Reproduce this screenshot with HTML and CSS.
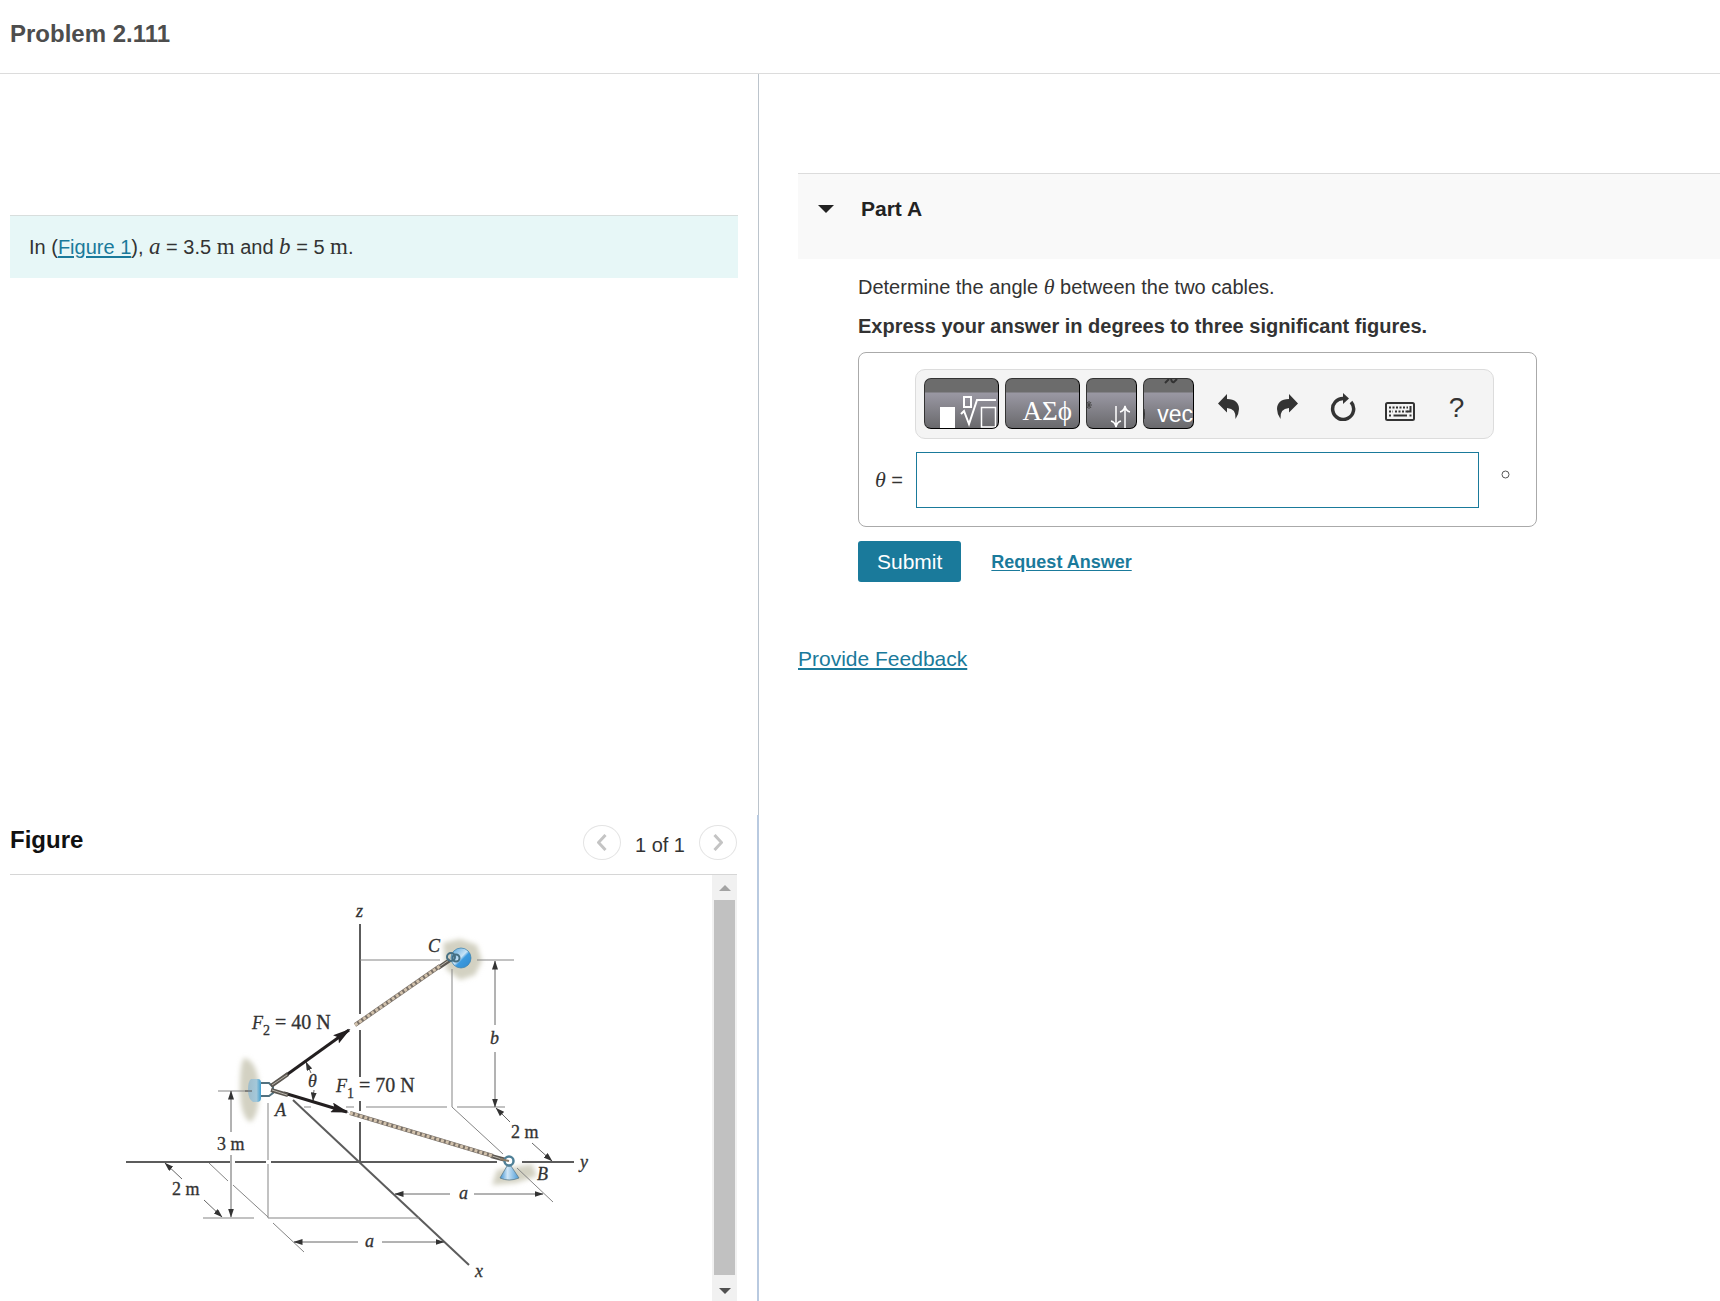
FILE: index.html
```html
<!DOCTYPE html>
<html lang="en">
<head>
<meta charset="utf-8">
<title>Problem 2.111</title>
<meta name="viewport" content="width=device-width, initial-scale=1">
<link rel="stylesheet" href="styles.css">
</head>
<body>
<header class="page-header">
  <h1 class="page-title">Problem 2.111</h1>
</header>
<main class="layout">
  <div class="side">
    <section class="intro">
      <p class="intro-box">In (<a href="#figure">Figure 1</a>), <i class="math var">a</i> = 3.5 <span class="math">m</span> and <i class="math var">b</i> = 5 <span class="math">m</span>.</p>
    </section>
    <section class="figure" id="figure">
      <div class="figure-head">
        <h2 class="figure-title">Figure</h2>
        <nav class="pager" aria-label="Figure navigation">
          <button class="pager-btn" type="button" aria-label="Previous figure">
            <svg width="10" height="17" viewBox="0 0 10 17"><path d="M8.500 1 1.500 8.500 8.500 16"/></svg>
          </button>
          <span class="pager-text">1 of 1</span>
          <button class="pager-btn" type="button" aria-label="Next figure">
            <svg width="10" height="17" viewBox="0 0 10 17"><path d="M1.500 1 8.500 8.500 1.500 16"/></svg>
          </button>
        </nav>
      </div>
      <div class="figure-view">
        <svg class="diagram" viewBox="10 875 702 426" role="img" aria-label="Two cables attached at A, running to B and C">
          <defs>
            <marker id="tip" viewBox="0 0 9 6" refX="8.500" refY="3" markerWidth="9" markerHeight="6" markerUnits="userSpaceOnUse" orient="auto-start-reverse"><path d="M0 0 9 3 0 6z" fill="#333"/></marker>
            <marker id="force" viewBox="0 0 18 10" refX="16" refY="5" markerWidth="18" markerHeight="10" markerUnits="userSpaceOnUse" orient="auto"><path d="M0 0 18 5 0 10 3 5z" fill="#231f20"/></marker>
            <filter id="soft" x="-30%" y="-30%" width="160%" height="160%"><feGaussianBlur stdDeviation="2.500"/></filter>
            <linearGradient id="pad"><stop offset="0" stop-color="#9dbccb"/><stop offset=".65" stop-color="#a5c8d9"/><stop offset="1" stop-color="#3f9fd0"/></linearGradient>
            <linearGradient id="cone"><stop offset="0" stop-color="#3b8fd0"/><stop offset=".4" stop-color="#cfe6f7"/><stop offset="1" stop-color="#4a9ad6"/></linearGradient>
            <linearGradient id="ball" x1="0" y1="0" x2="1" y2="1"><stop offset="0" stop-color="#4fa3dc"/><stop offset=".48" stop-color="#c9e3f6"/><stop offset=".58" stop-color="#3c9ade"/><stop offset="1" stop-color="#3289cf"/></linearGradient>
          </defs>
          <g fill="#d3d1c2" filter="url(#soft)">
            <path d="M443 943 460 939 477 945 482 961 475 975 460 980 446 969z"/>
            <path d="M497 1170 532 1164 537 1176 516 1183 492 1185z"/>
            <path d="M244 1058C255 1060 259 1075 259 1091C259 1108 256 1119 250 1122C243 1118 240 1105 240 1088C240 1072 241 1062 244 1058z"/>
          </g>
          <g class="axis">
            <path d="M360 924V1014M360 1030V1077M360 1101V1111M360 1122V1162"/>
            <path d="M126 1162H230M235 1162H266M271 1162H497M522 1162H574"/>
            <path d="M293 1100 469 1265"/>
          </g>
          <g class="thin">
            <path d="M360 960H440M477 960H514M452 969V1107"/>
            <path d="M304 1107H311M346 1107H354M366 1107H447M457 1107H505"/>
            <path d="M452 1107 503 1154M517 1168 553 1202"/>
            <path d="M268 1103V1160M268 1164V1218H419M203 1218H254M218 1091H252"/>
            <path d="M209 1163 228 1181M233 1185 268 1217M273 1223 304 1252"/>
          </g>
          <g class="dim">
            <path d="M495 1025V961"/><path d="M495 1052V1107"/>
            <path d="M510 1122 496 1108"/><path d="M532 1143 552 1161"/>
            <path d="M450 1194H395"/><path d="M474 1194H543"/>
            <path d="M358 1242H294"/><path d="M382 1242H444"/>
            <path d="M231 1132V1091"/><path d="M231 1155V1217"/>
            <path d="M182 1179 165 1163"/><path d="M204 1200 222 1217"/>
            <path d="M311 1073 306 1062"/><path d="M314 1090 313 1101"/>
          </g>
          <path d="M251 1079H258Q261 1079 261 1083V1098Q261 1102 257 1102H253Q248 1099 248 1090T251 1079z" fill="url(#pad)"/>
          <path d="M245 1091H252" stroke="#555"/>
          <path d="M261 1083H269L273 1087V1093L269 1096H261" fill="#fff" stroke="#51717f" stroke-width="2"/>
          <g class="force">
            <path d="M285 1076 349 1030"/>
            <path d="M284 1093 347 1112"/>
          </g>
          <g class="loop"><path d="M271 1086 288 1074M271 1090 288 1095M438 968 450 960M491 1156 506 1160"/></g>
          <g class="loop-core"><path d="M272 1085 287 1075M272 1090 287 1095M439 967 449 960M492 1156 505 1160"/></g>
          <g class="rope"><path d="M355 1025 440 966"/><path d="M350 1113 493 1156"/></g>
          <g class="strand"><path d="M355 1025 440 966"/><path d="M350 1113 493 1156"/></g>
          <circle cx="461" cy="958" r="10" fill="url(#ball)" stroke="#367fae" stroke-width=".7"/>
          <g fill="none" stroke="#456f83" stroke-width="2"><circle cx="451" cy="957" r="4"/><circle cx="456" cy="958" r="3.500"/></g>
          <path d="M507 1166H511L519 1178Q509 1182 500 1178z" fill="url(#cone)" stroke="#5e7c8c" stroke-width=".8"/>
          <circle cx="509" cy="1161" r="4.500" fill="#fff" stroke="#4f8097" stroke-width="2.500"/>
          <path d="M500 1159 509 1161" stroke="#8b7a66" stroke-width="2"/>
          <g class="label">
            <text x="356" y="917" class="it">z</text>
            <text x="428" y="952" class="it">C</text>
            <text x="490" y="1044" class="it">b</text>
            <text x="252" y="1029" class="it">F</text><text x="263" y="1035" class="sub">2</text><text x="275" y="1029" class="value">= 40 N</text>
            <text x="336" y="1092" class="it">F</text><text x="347" y="1098" class="sub">1</text><text x="359" y="1092" class="value">= 70 N</text>
            <text x="308" y="1087" class="it">θ</text>
            <text x="275" y="1116" class="it">A</text>
            <text x="217" y="1150">3 m</text>
            <text x="172" y="1195">2 m</text>
            <text x="511" y="1138">2 m</text>
            <text x="537" y="1180" class="it">B</text>
            <text x="580" y="1168" class="it">y</text>
            <text x="459" y="1199" class="it">a</text>
            <text x="365" y="1247" class="it">a</text>
            <text x="475" y="1277" class="it">x</text>
          </g>
        </svg>
        <div class="scrollbar" aria-hidden="true">
          <span class="arrow arrow-up"></span>
          <span class="thumb"></span>
          <span class="arrow arrow-down"></span>
        </div>
      </div>
    </section>
  </div>

  <div class="work">
    <button class="part-head" type="button" aria-expanded="true"><span class="caret"></span>Part A</button>
    <form class="part-body">
      <p class="question">Determine the angle <i class="theta">θ</i> between the two cables.</p>
      <p class="hint">Express your answer in degrees to three significant figures.</p>
      <div class="answer">
        <div class="toolbar" role="toolbar" aria-label="Equation tools">
          <button class="palette wide" type="button" aria-label="Templates">
            <svg width="73" height="49" viewBox="0 0 73 49" fill="none" stroke="#fff"><path d="M15 28H30V49H15z" fill="#fff" stroke="none"/><path d="M39 18H46V28H39z" stroke-width="2"/><path d="M36 35 39 32 44 45 52 21H71" stroke-width="2"/><path d="M56.500 28.500H70.500V48H56.500z" stroke-width="1.500"/></svg>
          </button>
          <button class="palette wide" type="button" aria-label="Greek symbols"><span class="greek">ΑΣϕ</span></button>
          <button class="palette" type="button" aria-label="Arrows">
            <svg width="49" height="49" viewBox="0 0 49 49" fill="none" stroke="#fff" stroke-width="1.500"><path d="M0 23 4 29M0 29 4 23M2 22V30M0 26H5" stroke="#444" stroke-width="1"/><path d="M29 27V47M24 42Q28 43 29 48Q30 43 34 42M38 49V28M33 33Q37 32 38 27Q39 32 43 33"/></svg>
          </button>
          <button class="palette" type="button" aria-label="Vectors">
            <svg class="scrap" width="49" height="49" viewBox="0 0 49 49" fill="none" stroke="#333" stroke-width="2"><path d="M21 4 25 0M27 0Q28 4 30 3L33 0" /><path d="M0 30Q1 35 0 40" stroke-width="1"/></svg>
            <span class="vec">vec</span>
          </button>
          <div class="tools">
            <button class="tool" type="button" aria-label="Undo">
              <svg width="23" height="26" viewBox="0 0 23 26"><path d="M1 9.500 10 0V5C18 5 22 9 22 15Q22 20 18.500 25Q19.500 14.500 10 14V18.500z" fill="#333"/></svg>
            </button>
            <button class="tool" type="button" aria-label="Redo">
              <svg width="26" height="26" viewBox="-3 0 26 26"><path d="M22 9.500 13 0V5C5 5 1 9 1 15Q1 20 4.500 25Q3.500 14.500 13 14V18.500z" fill="#333"/></svg>
            </button>
            <button class="tool" type="button" aria-label="Reset">
              <svg width="26" height="28" viewBox="0 0 26 28"><path d="M14 5.500A10.500 10.500 0 1 0 21 9" fill="none" stroke="#333" stroke-width="3.500"/><path d="M13 0 19 5.500 13 11z" fill="#333"/></svg>
            </button>
            <button class="tool low" type="button" aria-label="Keyboard">
              <svg width="30" height="19" viewBox="0 0 30 19" fill="none" stroke="#333"><rect x="1" y="1" width="28" height="17" rx="1.500" stroke-width="2"/><path d="M4 5.500H23M4 9.500H8M10 9.500H23" stroke-width="2" stroke-dasharray="2 1.500"/><path d="M25.500 4V9.500H22" stroke-width="2"/><path d="M4 13.500H6M8.500 13.500H22M24.500 13.500H26.500" stroke-width="2"/></svg>
            </button>
            <button class="tool help" type="button" aria-label="Help">?</button>
          </div>
        </div>
        <div class="entry">
          <label for="theta-value"><i class="theta">θ</i> =</label>
          <input id="theta-value" type="text">
          <span class="unit" aria-label="degrees"><svg width="9" height="9" viewBox="0 0 9 9"><circle cx="4.500" cy="4.500" r="3.500" fill="none" stroke="#555"/></svg></span>
        </div>
      </div>
      <div class="actions">
        <button class="submit" type="button">Submit</button>
        <a class="request" href="#answer">Request Answer</a>
      </div>
    </form>
    <a class="feedback" href="#feedback">Provide Feedback</a>
  </div>
</main>
</body>
</html>
```
FILE: styles.css
```css
* { box-sizing: border-box; }

body {
  margin: 0;
  min-height: 100vh;
  display: flex;
  flex-direction: column;
  background: #fff;
  color: #333;
  font: 20px/24px "Liberation Sans", Arial, sans-serif;
}

h1, h2, p { margin: 0; }
button { font: inherit; cursor: pointer; }
a { color: #1a7a9b; text-underline-offset: 2px; }

.page-header { padding: 20px 10px 25px; border-bottom: 1px solid #dcdcdc; }
.page-title { font-size: 24px; line-height: 28px; color: #4d4d4d; }

.layout {
  flex: 1;
  display: grid;
  grid-template-columns: 759fr 961fr;
}

/* Left column */
.side { display: flex; flex-direction: column; }
.intro { flex: 1; padding: 141px 20px 0 10px; border-right: 1px solid #bcc4cc; }
.intro-box {
  padding: 19px;
  background: #e7f7f7;
  border-top: 1px solid #d8dedd;
}
.math { font: 23px/24px "Liberation Serif", "Times New Roman", serif; }
.var { font-style: italic; }
.theta { font: italic 22px/24px "Liberation Serif", "Times New Roman", serif; }

.figure {
  height: 486px;
  display: flex;
  flex-direction: column;
  padding: 0 20px 0 10px;
  border-right: 2px solid #b9cae0;
}
.figure-head {
  height: 60px;
  display: flex;
  justify-content: space-between;
  border-bottom: 1px solid #d6d6d6;
}
.figure-title { padding-top: 11px; font-size: 24px; line-height: 28px; color: #111; }
.pager { display: flex; align-items: flex-start; gap: 14px; padding-top: 10px; }
.pager-text { padding-top: 8px; }
.pager-btn {
  width: 38px;
  height: 35px;
  padding: 0;
  display: grid;
  place-items: center;
  border: 1px solid #e4e4e4;
  border-radius: 50%;
  background: #fff;
}
.pager-btn path { fill: none; stroke: #c4c4c4; stroke-width: 3; }

.figure-view { flex: 1; min-height: 0; display: flex; }
.diagram { flex: 1; min-width: 0; height: 426px; }
.axis { fill: none; stroke: #5c5c5c; stroke-width: 2; }
.thin { fill: none; stroke: #858585; stroke-width: 1; }
.dim path { stroke: #666; stroke-width: 1; marker-end: url(#tip); }
.force path { stroke: #231f20; stroke-width: 3; marker-end: url(#force); }
.loop { stroke: #5b5751; stroke-width: 4; }
.loop-core { stroke: #b9b4ab; stroke-width: 1; }
.rope { stroke: #7a7168; stroke-width: 4; }
.strand { stroke: #d2c2ac; stroke-width: 3; stroke-dasharray: 3 2; }
.label {
  font: 18px "Liberation Serif", "Times New Roman", serif;
  fill: #333;
  stroke: #333;
  stroke-width: .3px;
}
.it { font-style: italic; }
.sub { font-size: 14px; }
.value { font-size: 20px; }

.scrollbar {
  width: 25px;
  display: flex;
  flex-direction: column;
  align-items: center;
  background: #f1f1f1;
}
.thumb { flex: 1; width: 21px; background: #c1c1c1; }
.arrow { height: 25px; display: grid; place-items: center; }
.arrow::before { content: ""; border: 6px solid transparent; }
.arrow-up::before { border-top: 0; border-bottom-color: #a3a3a3; }
.arrow-down { height: 26px; padding-top: 6px; }
.arrow-down::before { border-bottom: 0; border-top-color: #505050; }

/* Right column */
.work { padding: 99px 0 0 39px; }
.part-head {
  width: 100%;
  height: 86px;
  display: flex;
  align-items: center;
  gap: 27px;
  padding: 0 0 15px 20px;
  border: 0;
  border-top: 1px solid #dcdcdc;
  background: #f9f9f9;
  color: #222;
  font-size: 21px;
  font-weight: bold;
}
.caret { border: 8px solid transparent; border-top-color: #222; border-bottom: 0; }

.part-body { padding: 16px 20px 0 60px; }
.hint { margin-top: 15px; font-weight: bold; }

.answer {
  max-width: 679px;
  margin-top: 14px;
  padding: 16px 15px 18px;
  border: 1px solid #aaa;
  border-radius: 8px;
}
.toolbar {
  display: flex;
  align-items: flex-start;
  height: 70px;
  gap: 6px;
  margin: 0 27px 0 41px;
  padding: 8px;
  border: 1px solid #dcdcdc;
  border-radius: 10px;
  background: #f4f4f4;
}
.palette {
  position: relative;
  width: 51px;
  height: 51px;
  padding: 0;
  display: flex;
  justify-content: flex-end;
  overflow: hidden;
  border: 1px solid #333;
  border-right-color: #000;
  border-bottom-color: #000;
  border-radius: 7px;
  background: linear-gradient(#6c6c6c 0 13px, #9a98a3 14px, #69696c);
  color: #fff;
}
.wide { width: 75px; }
.greek { padding: 18px 7px 0 0; font: 27px/28px "Liberation Serif", "Times New Roman", serif; }
.vec { padding-top: 21px; font-size: 23px; line-height: 28px; }
.scrap { position: absolute; left: 0; top: 0; }
.tools { flex: 1; display: flex; }
.tool {
  flex: 1;
  height: 58px;
  padding: 0;
  display: grid;
  place-items: center;
  border: 0;
  background: none;
  color: #333;
}
.low { padding-top: 8px; }
.help { padding-top: 2px; font-size: 28px; line-height: 32px; }

.entry { display: flex; align-items: center; margin-top: 13px; }
.entry label { width: 41px; margin-left: 1px; }
.entry input {
  flex: 1;
  min-width: 0;
  height: 56px;
  padding: 0 12px;
  border: 1px solid #1a7a9b;
  font: inherit;
}
.unit { width: 42px; padding: 0 0 14px 10px; text-align: center; line-height: 9px; }

.actions { display: flex; align-items: center; gap: 30px; margin-top: 14px; }
.submit {
  height: 41px;
  padding: 0 19px;
  border: 0;
  border-radius: 3px;
  background: #1a7a9b;
  color: #fff;
  font-size: 21px;
}
.request { font-size: 18px; font-weight: bold; }
.feedback { display: inline-block; margin-top: 65px; font-size: 21px; text-decoration-thickness: 2px; }
```
